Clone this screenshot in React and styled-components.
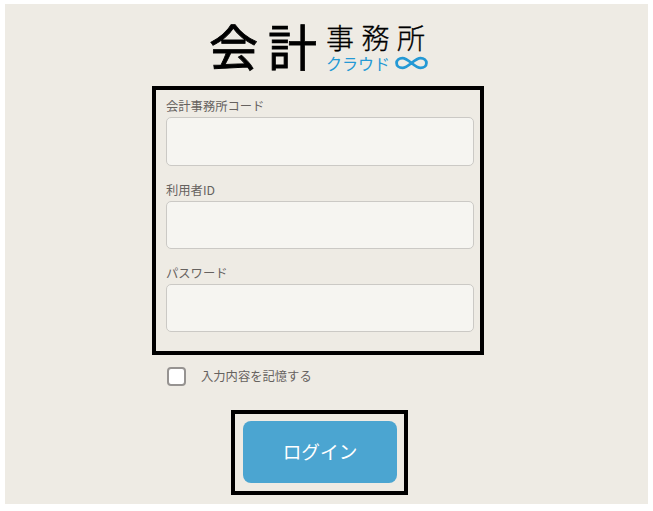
import React from "react";
import styled, { createGlobalStyle } from "styled-components";

const GlobalStyle = createGlobalStyle`
  * { box-sizing: border-box; }
  body {
    margin: 0;
    background: #fff;
    font-family: "Noto Sans CJK JP", "Noto Sans", sans-serif;
  }
`;

const Page = styled.main`
  display: flex;
  flex-direction: column;
  align-items: flex-start;
  width: 643px;
  height: 500px;
  margin: 4px 5px 7px;
  background: #eeebe4;
`;

const Logo = styled.h1`
  display: flex;
  height: 82px;
  margin: 0 0 0 204px;
  padding-top: 16px;
  color: #000;
  white-space: nowrap;
`;

const LogoMain = styled.span`
  width: 117px;
  font-size: 49px;
  font-weight: 400;
  line-height: 50px;
  letter-spacing: 10px;
  -webkit-text-stroke: 0.8px #000;
`;

const LogoSide = styled.span`
  display: flex;
  flex-direction: column;
  padding-top: 2px;
`;

const LogoOffice = styled.span`
  font-size: 28px;
  font-weight: 300;
  line-height: 31px;
  letter-spacing: 7.5px;
  -webkit-text-stroke: 0.3px #000;
`;

const LogoCloud = styled.span`
  display: flex;
  align-items: center;
  gap: 4px;
  height: 20px;
  font-size: 16px;
  line-height: 20px;
  font-weight: 400;
  color: #2499d5;
`;

const Fields = styled.section`
  width: 332px;
  height: 269px;
  margin-left: 146.5px;
  padding: 6px 5px 0 10.5px;
  border: 4px solid #000;
`;

const Field = styled.label`
  display: flex;
  flex-direction: column;
  height: ${(p) => p.$height}px;
`;

const Caption = styled.span`
  height: ${(p) => p.$height}px;
  padding-top: 1px;
  font-size: 12.3px;
  line-height: 18px;
  color: #66625f;
`;

const Input = styled.input`
  width: 308px;
  height: ${(p) => p.$height}px;
  margin: 0;
  padding: 0 12px;
  border: 1px solid #cbc9c5;
  border-radius: 5px;
  background: #f6f5f1;
  outline: none;
`;

const Remember = styled.label`
  display: flex;
  align-items: center;
  gap: 15px;
  height: 19px;
  margin: 12px 0 0 162px;
  font-size: 12.3px;
  color: #66625f;
`;

const RememberText = styled.span`
  padding-bottom: 2px;
`;

const Check = styled.input`
  appearance: none;
  width: 19px;
  height: 19px;
  margin: 0;
  border: 2px solid #969391;
  border-radius: 4px;
  background: #fff;
`;

const ButtonFrame = styled.div`
  display: flex;
  align-items: flex-start;
  width: 177px;
  height: 85px;
  margin: 24px 0 0 225.5px;
  padding: 7px 0 0 8.5px;
  border: 4px solid #000;
`;

const LoginButton = styled.button`
  width: 154px;
  height: 62px;
  padding: 0 0 4px;
  border: 0;
  border-radius: 8px;
  background: #4ba5d1;
  color: #fff;
  font: 400 18.7px "Noto Sans CJK JP", sans-serif;
`;

const fields = [
  { label: "会計事務所コード", type: "text", height: 84, caption: 21, input: 49 },
  { label: "利用者ID", type: "text", height: 83, caption: 21, input: 48 },
  { label: "パスワード", type: "password", height: 69, caption: 21, input: 48 },
];

function InfinityMark() {
  return (
    <svg width="35" height="14" viewBox="0 0 36 15" fill="none" stroke="currentColor" strokeWidth="3">
      <path d="M18 7.5C14 4.2 11.5 2.2 8.3 2.2C4.6 2.2 2 4.5 2 7.5S4.6 12.8 8.3 12.8C11.5 12.8 14 10.8 18 7.5C22 4.2 24.5 2.2 27.7 2.2C31.4 2.2 34 4.5 34 7.5S31.4 12.8 27.7 12.8C24.5 12.8 22 10.8 18 7.5Z" />
    </svg>
  );
}

export default function App() {
  return (
    <>
      <GlobalStyle />
      <Page>
        <Logo>
          <LogoMain>会計</LogoMain>
          <LogoSide>
            <LogoOffice>事務所</LogoOffice>
            <LogoCloud>
              クラウド
              <InfinityMark />
            </LogoCloud>
          </LogoSide>
        </Logo>
        <Fields>
          {fields.map((f) => (
            <Field key={f.label} $height={f.height}>
              <Caption $height={f.caption}>{f.label}</Caption>
              <Input type={f.type} $height={f.input} />
            </Field>
          ))}
        </Fields>
        <Remember>
          <Check type="checkbox" />
          <RememberText>入力内容を記憶する</RememberText>
        </Remember>
        <ButtonFrame>
          <LoginButton type="button">ログイン</LoginButton>
        </ButtonFrame>
      </Page>
    </>
  );
}
